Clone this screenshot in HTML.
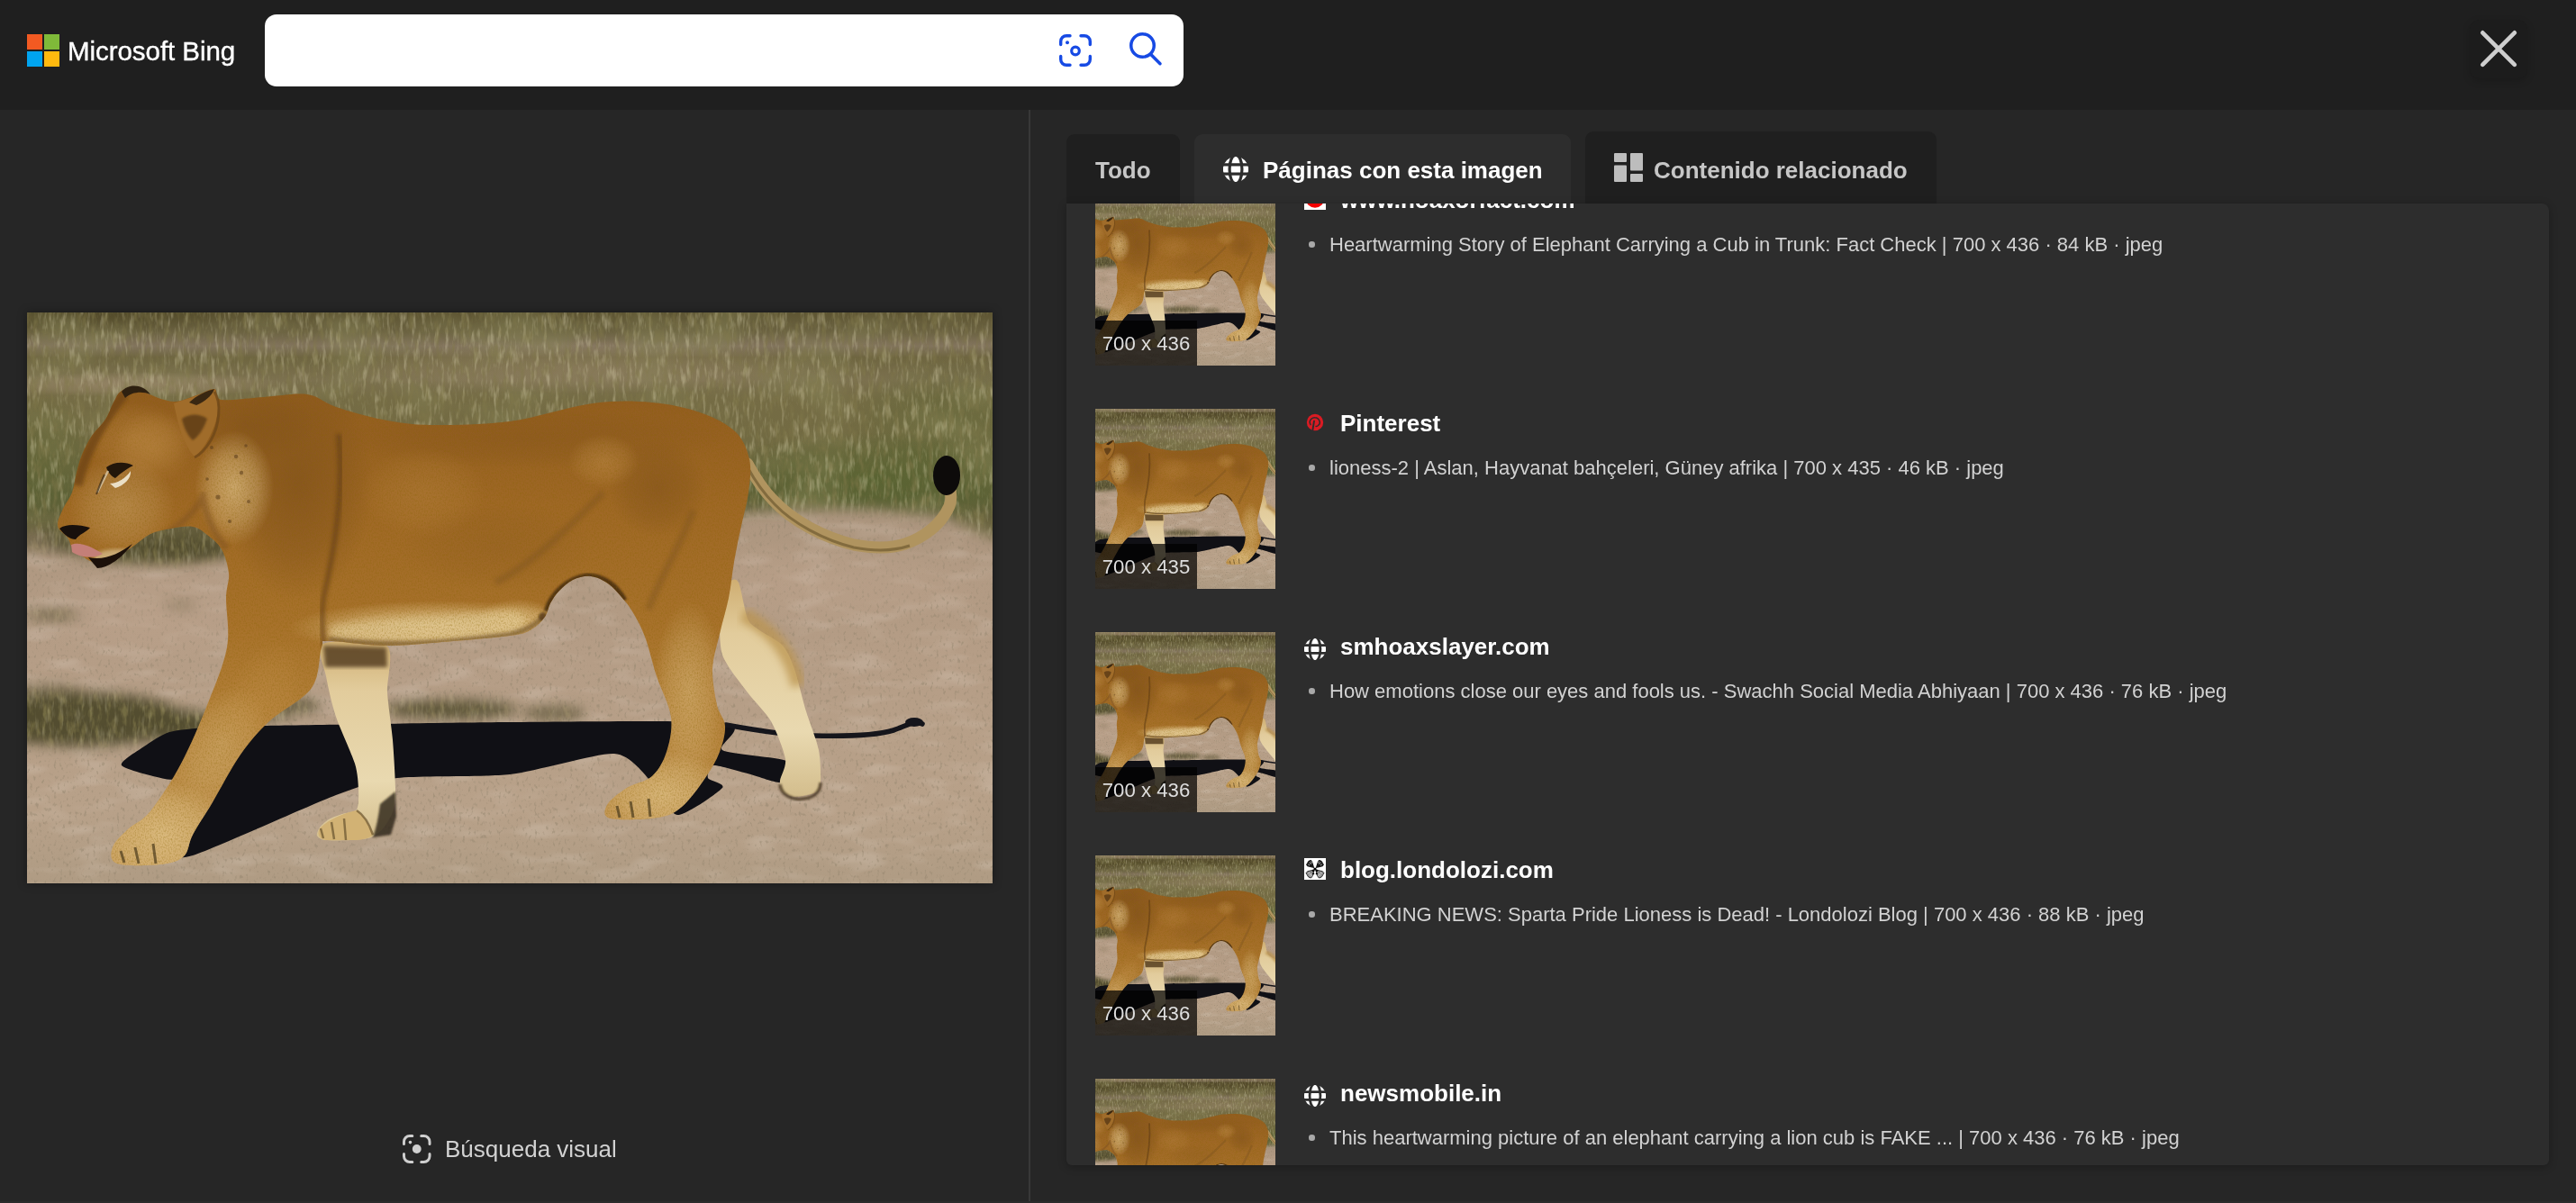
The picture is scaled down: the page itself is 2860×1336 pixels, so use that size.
<!DOCTYPE html>
<html lang="es">
<head>
<meta charset="utf-8">
<title>Bing - Búsqueda visual</title>
<style>
*{box-sizing:border-box;margin:0;padding:0}
html,body{width:2860px;height:1336px;overflow:hidden;background:#262626;font-family:"Liberation Sans",Arial,sans-serif;color:#fff}
body{position:relative}
@media (max-width:1600px){html{zoom:.5}}
.abs{position:absolute}
#wordmark,.tab span,.ttl,.dsc,.badge,#vsbtn span{will-change:transform}
/* header */
#hdr{position:absolute;left:0;top:0;width:2860px;height:122px;background:#1f1f1f}
#logo{position:absolute;left:30px;top:38px;width:36px;height:36px}
#logo i{position:absolute;width:17px;height:17px;display:block}
#wordmark{position:absolute;left:75px;top:34.800px;font-size:29.500px;line-height:44px;color:#fff;letter-spacing:-0.05px;white-space:nowrap;-webkit-text-stroke:.35px #fff}
#sbox{position:absolute;left:294px;top:16px;width:1020px;height:80px;background:#fff;border-radius:13px}
#closebg{position:absolute;left:2742px;top:22px;width:64px;height:65px;border-radius:10px;background:#1c1c1c;box-shadow:0 3px 8px rgba(0,0,0,.18)}
#close{position:absolute;left:2744px;top:24px;width:60px;height:60px}
/* left */
#divider{position:absolute;left:1142px;top:122px;width:2px;height:1214px;background:#383838}
#mainimg{position:absolute;left:30px;top:347px;width:1072px;height:634px;box-shadow:0 0 10px rgba(0,0,0,.35)}
#vsbtn{position:absolute;left:447px;top:1260px;height:32px;white-space:nowrap}
#vsbtn span{position:absolute;left:47.300px;top:0;font-size:26px;line-height:32px;color:#d2d2d2}
/* tabs */
.tab{position:absolute;border-radius:9px 9px 0 0;background:#1f1f1f;font-weight:bold;font-size:26px;color:#c6c6c6;white-space:nowrap}
.tab span{position:absolute;top:0;line-height:30px}
#panel{position:absolute;left:1184px;top:226px;width:1646px;height:1068px;background:#2d2d2d;border-radius:0 8px 6px 6px;overflow:hidden;box-shadow:0 2px 10px rgba(0,0,0,.28)}
.row{position:absolute;left:32px;width:1600px;height:200px}
.thumb{position:absolute;left:0;top:0;width:200px;height:200px;overflow:hidden;background:#a98a5a}
.badge{position:absolute;left:0;bottom:0;width:113px;height:50px;background:rgba(0,0,0,.72);color:#dedede;font-size:22.200px;line-height:52px;text-align:center;white-space:nowrap}
.fav{position:absolute;left:232px;top:3px;width:24px;height:24px}
.fav.g{top:7px}
.ttl{position:absolute;left:272px;top:1px;font-weight:bold;font-size:26px;line-height:30px;color:#fff;white-space:nowrap}
.dot{position:absolute;left:237.200px;top:62.300px;width:6.600px;height:6.600px;border-radius:50%;background:#a9a9a9}
.dsc{position:absolute;left:260px;top:53px;font-size:22px;line-height:26px;color:#d2d2d2;white-space:nowrap}
</style>
</head>
<body>
<svg width="0" height="0" style="position:absolute;left:-10px;top:-10px">
<!--LION_START-->
<symbol id="lion" viewBox="0 -36 1072 692" preserveAspectRatio="none">
<defs>
<linearGradient id="gGrass" x1="0" y1="0" x2="0" y2="1"><stop offset="0.0" stop-color="#9c876c"/><stop offset="0.026" stop-color="#94806a"/><stop offset="0.044" stop-color="#5a5030"/><stop offset="0.091" stop-color="#5a522f"/><stop offset="0.171" stop-color="#6c6342"/><stop offset="0.215" stop-color="#82745d"/><stop offset="0.253" stop-color="#6e6540"/><stop offset="0.326" stop-color="#7c714f"/><stop offset="0.385" stop-color="#756c45"/><stop offset="0.488" stop-color="#736b43"/><stop offset="0.606" stop-color="#6d6840"/><stop offset="0.709" stop-color="#5f6139"/><stop offset="0.797" stop-color="#665f3d"/><stop offset="0.9" stop-color="#615a3a"/><stop offset="1" stop-color="#736949"/></linearGradient>
<linearGradient id="gSand" x1="0" y1="0" x2="0" y2="1"><stop offset="0" stop-color="#a8927a"/><stop offset="0.42" stop-color="#ae9780"/><stop offset="0.6" stop-color="#b59d86"/><stop offset="0.85" stop-color="#b8a189"/><stop offset="1" stop-color="#ad9a82"/></linearGradient>
<linearGradient id="gBody" x1="0" y1="0" x2="0" y2="1"><stop offset="0" stop-color="#915c1f"/><stop offset="0.25" stop-color="#9f6825"/><stop offset="0.5" stop-color="#a8722b"/><stop offset="0.7" stop-color="#b4813a"/><stop offset="1" stop-color="#c79d5c"/></linearGradient>
<linearGradient id="gCream" x1="0" y1="0" x2="0" y2="1"><stop offset="0" stop-color="#cfae72"/><stop offset="0.25" stop-color="#e2cc9c"/><stop offset="0.7" stop-color="#e9d9b0"/><stop offset="1" stop-color="#d3bd8c"/></linearGradient>
<radialGradient id="gShoulder" cx=".5" cy=".5" r=".5"><stop offset="0" stop-color="#83531c" stop-opacity="0.8"/><stop offset=".6" stop-color="#83531c" stop-opacity="0.44"/><stop offset="1" stop-color="#83531c" stop-opacity="0"/></radialGradient>
<radialGradient id="gLight" cx=".5" cy=".5" r=".5"><stop offset="0" stop-color="#e2c58b" stop-opacity="0.85"/><stop offset=".6" stop-color="#e2c58b" stop-opacity="0.47"/><stop offset="1" stop-color="#e2c58b" stop-opacity="0"/></radialGradient>
<radialGradient id="gHi" cx=".5" cy=".5" r=".5"><stop offset="0" stop-color="#c89650" stop-opacity="0.7"/><stop offset=".6" stop-color="#c89650" stop-opacity="0.39"/><stop offset="1" stop-color="#c89650" stop-opacity="0"/></radialGradient>
<radialGradient id="gGreen" cx=".5" cy=".5" r=".5"><stop offset="0" stop-color="#56632f" stop-opacity="0.75"/><stop offset=".6" stop-color="#56632f" stop-opacity="0.41"/><stop offset="1" stop-color="#56632f" stop-opacity="0"/></radialGradient>
<radialGradient id="gDarkG" cx=".5" cy=".5" r=".5"><stop offset="0" stop-color="#4a4224" stop-opacity="0.8"/><stop offset=".6" stop-color="#4a4224" stop-opacity="0.44"/><stop offset="1" stop-color="#4a4224" stop-opacity="0"/></radialGradient>
<radialGradient id="gTuft" cx=".5" cy=".5" r=".5"><stop offset="0" stop-color="#4d4828" stop-opacity="0.95"/><stop offset=".6" stop-color="#4d4828" stop-opacity="0.52"/><stop offset="1" stop-color="#4d4828" stop-opacity="0"/></radialGradient>
<radialGradient id="gPink" cx=".5" cy=".5" r=".5"><stop offset="0" stop-color="#c4a892" stop-opacity="0.7"/><stop offset=".6" stop-color="#c4a892" stop-opacity="0.39"/><stop offset="1" stop-color="#c4a892" stop-opacity="0"/></radialGradient>
<filter id="fGrain" x="0" y="0" width="100%" height="100%"><feTurbulence type="fractalNoise" baseFrequency=".7 .45" numOctaves="2" seed="3"/><feColorMatrix type="matrix" values="0 0 0 0 .25  0 0 0 0 .13  0 0 0 0 0  0 0 0 -2.2 1.25"/></filter>
<filter id="fGrass" x="0" y="0" width="100%" height="100%"><feTurbulence type="fractalNoise" baseFrequency=".22 .05" numOctaves="3" seed="8"/><feColorMatrix type="matrix" values="0 0 0 0 .74  0 0 0 0 .69  0 0 0 0 .46  0 0 0 -3.2 1.6"/></filter>
<filter id="fGrassD" x="0" y="0" width="100%" height="100%"><feTurbulence type="fractalNoise" baseFrequency=".17 .055" numOctaves="3" seed="21"/><feColorMatrix type="matrix" values="0 0 0 0 .22  0 0 0 0 .19  0 0 0 0 .07  0 0 0 -3.2 1.7"/></filter>
<filter id="fBlotch" x="0" y="0" width="100%" height="100%"><feTurbulence type="fractalNoise" baseFrequency=".012 .02" numOctaves="2" seed="4"/><feColorMatrix type="matrix" values="0 0 0 0 .25  0 0 0 0 .24  0 0 0 0 .1  0 0 0 -3 1.6"/></filter>
<filter id="fSpeck" x="0" y="0" width="100%" height="100%"><feTurbulence type="fractalNoise" baseFrequency=".3 .2" numOctaves="2" seed="5"/><feColorMatrix type="matrix" values="0 0 0 0 .3  0 0 0 0 .24  0 0 0 0 .16  0 0 0 -5 2.1"/></filter>
<filter id="fSandL" x="0" y="0" width="100%" height="100%"><feTurbulence type="fractalNoise" baseFrequency=".02 .06" numOctaves="2" seed="11"/><feColorMatrix type="matrix" values="0 0 0 0 .82  0 0 0 0 .74  0 0 0 0 .66  0 0 0 -3 1.55"/></filter>
<filter id="b2"><feGaussianBlur stdDeviation="2"/></filter><filter id="b4"><feGaussianBlur stdDeviation="4"/></filter><filter id="b1"><feGaussianBlur stdDeviation="1"/></filter><filter id="b8" x="-10%" y="-10%" width="120%" height="120%"><feGaussianBlur stdDeviation="7"/></filter>
<clipPath id="cBody"><path d="M34 237 C33.2 231.7 37.3 224.2 40 218 C42.7 211.8 47.5 206.7 50 200 C52.5 193.3 53.2 185.0 55 178 C56.8 171.0 58.2 164.8 61 158 C63.8 151.2 67.7 143.5 72 137 C76.3 130.5 83.0 125.2 87 119 C91.0 112.8 93.0 105.3 96 100 C99.0 94.7 100.3 89.8 105 87 C109.7 84.2 118.8 82.3 124 83 C129.2 83.7 129.5 88.3 136 91 C142.5 93.7 154.3 98.8 163 99 C171.7 99.2 180.5 94.3 188 92 C195.5 89.7 203.3 84.2 208 85 C212.7 85.8 206.8 95.5 216 97 C225.2 98.5 247.2 95.0 263 94 C278.8 93.0 297.7 89.2 311 91 C324.3 92.8 329.0 100.3 343 105 C357.0 109.7 377.5 115.7 395 119 C412.5 122.3 424.5 124.7 448 125 C471.5 125.3 506.0 125.0 536 121 C566.0 117.0 601.7 104.5 628 101 C654.3 97.5 674.2 98.3 694 100 C713.8 101.7 731.7 105.7 747 111 C762.3 116.3 776.8 123.3 786 132 C795.2 140.7 799.5 151.7 802 163 C804.5 174.3 802.5 187.7 801 200 C799.5 212.3 795.7 224.2 793 237 C790.3 249.8 787.3 263.7 785 277 C782.7 290.3 781.7 303.7 779 317 C776.3 330.3 772.0 343.8 769 357 C766.0 370.2 761.5 382.8 761 396 C760.5 409.2 763.7 425.5 766 436 C768.3 446.5 774.5 450.3 775 459 C775.5 467.7 772.7 478.3 769 488 C765.3 497.7 760.0 506.8 753 517 C746.0 527.2 735.8 541.7 727 549 C718.2 556.3 713.2 558.8 700 561 C686.8 563.2 657.3 564.3 648 562 C638.7 559.7 641.0 552.7 644 547 C647.0 541.3 657.7 533.3 666 528 C674.3 522.7 686.7 521.7 694 515 C701.3 508.3 706.5 499.0 710 488 C713.5 477.0 716.8 463.0 715 449 C713.2 435.0 703.8 418.8 699 404 C694.2 389.2 690.5 372.0 686 360 C681.5 348.0 676.3 339.3 672 332 C667.7 324.7 664.5 321.2 660 316 C655.5 310.8 650.7 304.8 645 301 C639.3 297.2 632.5 293.7 626 293 C619.5 292.3 611.8 294.3 606 297 C600.2 299.7 595.2 304.7 591 309 C586.8 313.3 583.7 318.2 581 323 C578.3 327.8 578.5 333.2 575 338 C571.5 342.8 566.5 348.5 560 352 C553.5 355.5 554.3 356.5 536 359 C517.7 361.5 473.5 365.2 450 367 C426.5 368.8 414.2 370.3 395 370 C375.8 369.7 346.3 364.7 335 365 C323.7 365.3 330.2 363.3 327 372 C323.8 380.7 325.7 403.3 316 417 C306.3 430.7 282.2 441.7 269 454 C255.8 466.3 247.5 476.0 237 491 C226.5 506.0 214.8 529.2 206 544 C197.2 558.8 189.3 570.0 184 580 C178.7 590.0 180.0 598.5 174 604 C168.0 609.5 160.3 611.7 148 613 C135.7 614.3 108.8 615.2 100 612 C91.2 608.8 93.0 600.3 95 594 C97.0 587.7 105.0 580.7 112 574 C119.0 567.3 127.2 566.2 137 554 C146.8 541.8 160.5 520.7 171 501 C181.5 481.3 191.5 457.5 200 436 C208.5 414.5 218.5 391.8 222 372 C225.5 352.2 220.7 330.7 221 317 C221.3 303.3 224.8 299.0 224 290 C223.2 281.0 220.0 270.2 216 263 C212.0 255.8 205.3 251.2 200 247 C194.7 242.8 190.7 239.2 184 238 C177.3 236.8 167.8 238.7 160 240 C152.2 241.3 144.3 242.5 137 246 C129.7 249.5 122.8 256.7 116 261 C109.2 265.3 103.0 269.3 96 272 C89.0 274.7 80.3 277.7 74 277 C67.7 276.3 62.0 270.7 58 268 C54.0 265.3 52.2 264.0 50 261 C47.8 258.0 47.7 254.0 45 250 C42.3 246.0 34.8 242.3 34 237 Z"/></clipPath>
<mask id="mGrass" maskUnits="userSpaceOnUse" x="0" y="-36" width="1072" height="692"><path d="M-40 -60 C151.7 -109.7 918.3 -108.7 1110 -60 C1301.7 -11.3 1126.7 184.3 1110 232 C1093.3 279.7 1040.0 228.2 1010 226 C980.0 223.8 960.0 219.8 930 219 C900.0 218.2 868.3 219.2 830 221 C791.7 222.8 755.0 227.5 700 230 C645.0 232.5 566.7 232.7 500 236 C433.3 239.3 345.0 244.7 300 250 C255.0 255.3 251.7 263.3 230 268 C208.3 272.7 193.3 276.7 170 278 C146.7 279.3 111.7 278.7 90 276 C68.3 273.3 53.3 267.0 40 262 C26.7 257.0 23.3 250.0 10 246 C-3.3 242.0 -31.7 289.0 -40 238 C-48.3 187.0 -231.7 -10.3 -40 -60 Z" fill="#fff" filter="url(#b8)"/></mask>
<mask id="mTuft" maskUnits="userSpaceOnUse" x="0" y="200" width="1072" height="320"><g filter="url(#b8)" fill="#fff"><ellipse cx="60" cy="452" rx="118" ry="30"/><ellipse cx="150" cy="458" rx="70" ry="18"/><ellipse cx="255" cy="446" rx="40" ry="9" opacity=".7"/><ellipse cx="300" cy="437" rx="26" ry="8" opacity=".8"/><ellipse cx="470" cy="441" rx="75" ry="11" opacity=".9"/><ellipse cx="585" cy="445" rx="36" ry="8" opacity=".7"/><ellipse cx="28" cy="336" rx="30" ry="5" opacity=".8"/><ellipse cx="170" cy="325" rx="18" ry="3" opacity=".6"/><ellipse cx="150" cy="262" rx="80" ry="12" opacity=".8"/><ellipse cx="30" cy="256" rx="50" ry="10" opacity=".6"/><ellipse cx="20" cy="420" rx="40" ry="8" opacity=".5"/></g></mask>
</defs>
<rect x="0" y="-36" width="1072" height="692" fill="url(#gSand)"/>
<rect x="0" y="215" width="1072" height="441" filter="url(#fSandL)" opacity=".2"/>
<rect x="0" y="215" width="1072" height="441" filter="url(#fSpeck)" opacity=".5"/>
<ellipse cx="880" cy="300" rx="220" ry="50" fill="url(#gPink)" opacity=".5"/>
<ellipse cx="150" cy="330" rx="160" ry="60" fill="url(#gPink)" opacity=".5"/>
<g mask="url(#mGrass)">
<rect x="0" y="-36" width="1072" height="340" fill="url(#gGrass)"/>
<ellipse cx="950" cy="185" rx="200" ry="52" fill="url(#gGreen)"/>
<ellipse cx="1030" cy="120" rx="120" ry="70" fill="url(#gGreen)" opacity=".5"/>
<ellipse cx="40" cy="-10" rx="230" ry="36" fill="url(#gDarkG)"/>
<ellipse cx="640" cy="-24" rx="520" ry="26" fill="url(#gDarkG)" opacity=".6"/>
<ellipse cx="15" cy="170" rx="70" ry="80" fill="url(#gGreen)" opacity=".55"/>
<ellipse cx="620" cy="60" rx="300" ry="30" fill="url(#gPink)" opacity=".35"/>
<ellipse cx="120" cy="80" rx="170" ry="14" fill="url(#gPink)" opacity=".5"/>
<rect x="0" y="-36" width="1072" height="340" filter="url(#fBlotch)" opacity=".45"/>
<rect x="0" y="-36" width="1072" height="340" filter="url(#fGrass)" opacity=".36"/>
<rect x="0" y="-36" width="1072" height="340" filter="url(#fGrassD)" opacity=".5"/>
</g>
<g mask="url(#mTuft)">
<rect x="0" y="225" width="1072" height="280" fill="#4e492b" opacity=".95"/>
<rect x="0" y="225" width="1072" height="280" filter="url(#fGrassD)" opacity=".7"/>
<rect x="0" y="225" width="1072" height="280" filter="url(#fGrass)" opacity=".2"/>
</g>
<path d="M105 503 C102.3 498.8 123.8 486.3 130 482 C136.2 477.7 149.8 468.4 158 466 C166.2 463.6 187.8 461.8 200 461 C212.2 460.2 223.8 459.7 263 459 C302.2 458.3 476.1 455.4 536 455 C595.9 454.6 748.5 452.4 776 456 C803.5 459.6 764.2 481.1 772 486 C779.8 490.9 835.3 493.8 843 498 C850.7 502.2 843.0 520.4 838 522 C833.0 523.6 808.9 514.2 800 512 C791.1 509.8 767.1 502.4 762 503 C756.9 503.6 754.8 514.1 756 517 C757.2 519.9 776.0 523.2 772 528 C768.0 532.8 731.1 558.7 722 558 C712.9 557.3 702.2 529.9 694 522 C685.8 514.1 670.4 491.1 652 490 C633.6 488.9 564.1 509.9 536 513 C507.9 516.1 433.5 514.3 411 517 C388.5 519.7 369.5 526.0 343 536 C316.5 546.0 205.3 596.5 184 603 C162.7 609.5 157.6 601.2 160 592 C162.4 582.8 205.8 532.6 205 524 C204.2 515.4 164.7 520.5 153 518 C141.3 515.5 107.7 507.2 105 503 Z" fill="#101015"/>
<path d="M776 458 C820 466 850 470 873 470 C910 471 945 469 962 464 C975 460 985 452 994 457" fill="none" stroke="#15151b" stroke-width="5.5" stroke-linecap="round"/>
<ellipse cx="985" cy="455" rx="10" ry="5" fill="#15151b"/>
<path d="M800 168 C812 190 820 200 828 208 C850 232 885 250 918 258 C940 262 960 262 975 257 C995 250 1015 236 1024 215 C1027 208 1026 200 1024 192" fill="none" stroke="#b0945f" stroke-width="13" stroke-linecap="round"/>
<path d="M800 172 C812 194 822 205 830 213 C850 234 885 253 918 261 C945 266 965 264 980 259" fill="none" stroke="#6f5a30" stroke-width="3" opacity=".7"/>
<ellipse cx="1021" cy="181" rx="15" ry="22" fill="#0d0b0a"/>
<path d="M770 330 C768.9 340.7 768.0 367.7 772 380 C776.0 392.3 792.8 412.1 800 422 C807.2 431.9 820.4 444.1 826 454 C831.6 463.9 840.7 487.2 842 496 C843.3 504.8 836.5 515.2 836 520 C835.5 524.8 835.9 529.6 838 532 C840.1 534.4 846.9 537.9 852 538 C857.1 538.1 872.1 535.1 876 533 C879.9 530.9 880.6 528.3 881 522 C881.4 515.7 881.1 496.5 879 486 C876.9 475.5 868.6 455.0 865 443 C861.4 431.0 855.5 405.7 852 396 C848.5 386.3 844.3 375.9 839 370 C833.7 364.1 817.2 356.0 812 352 C806.8 348.0 802.9 346.9 800 340 C797.1 333.1 792.7 305.3 790 300 C787.3 294.7 782.7 296.0 780 300 C777.3 304.0 771.1 319.3 770 330 Z" fill="url(#gCream)"/>
<path d="M795 335 C825 352 848 375 856 415" stroke="#bb9450" stroke-width="16" fill="none" opacity=".75" filter="url(#b4)"/>
<path d="M836 524 C837 536 850 542 862 540 C873 539 881 533 881 522" stroke="#3a2c18" stroke-width="3.500" fill="none" opacity=".75" filter="url(#b1)"/>
<path d="M329 368 C320.1 372.5 330.1 393.2 332 404 C333.9 414.8 338.7 436.1 343 449 C347.3 461.9 360.7 490.2 364 501 C367.3 511.8 367.7 523.2 368 530 C368.3 536.8 368.4 548.4 366 552 C363.6 555.6 354.1 555.5 350 557 C345.9 558.5 338.3 561.0 335 563 C331.7 565.0 326.7 569.6 325 572 C323.3 574.4 321.2 579.1 322 581 C322.8 582.9 325.9 585.3 331 586 C336.1 586.7 353.2 586.4 360 586 C366.8 585.6 377.2 584.9 382 583 C386.8 581.1 392.7 576.1 396 572 C399.3 567.9 405.3 557.9 407 552 C408.7 546.1 409.1 538.3 409 528 C408.9 517.7 407.2 489.1 406 475 C404.8 460.9 400.9 436.0 400 422 C399.1 408.0 408.5 377.2 399 370 C389.5 362.8 337.9 363.5 329 368 Z" fill="url(#gCream)"/>
<path d="M329 370 L399 372 L400 394 L331 394 Z" fill="#4f391a" opacity=".8" filter="url(#b2)"/>
<path d="M366 553 C352 556 336 562 326 572 C321 578 324 585 332 586 L362 586 C372 586 380 584 384 580 C380 568 374 558 366 553 Z" fill="#d2b274"/>
<path d="M392 546 L409 532 L410 560 L404 580 L384 583 C388 572 390 560 392 546 Z" fill="#2c2214" opacity=".8" filter="url(#b1)"/>
<path d="M326 573 L329 584 M338 566 L341 585 M352 562 L354 586" stroke="#4a3a1c" stroke-width="2.500" opacity=".55"/>
<path d="M366 553 C374 558 380 568 384 580" stroke="#5a4522" stroke-width="2.500" fill="none" opacity=".6"/>
<path d="M34 237 C33.2 231.7 37.3 224.2 40 218 C42.7 211.8 47.5 206.7 50 200 C52.5 193.3 53.2 185.0 55 178 C56.8 171.0 58.2 164.8 61 158 C63.8 151.2 67.7 143.5 72 137 C76.3 130.5 83.0 125.2 87 119 C91.0 112.8 93.0 105.3 96 100 C99.0 94.7 100.3 89.8 105 87 C109.7 84.2 118.8 82.3 124 83 C129.2 83.7 129.5 88.3 136 91 C142.5 93.7 154.3 98.8 163 99 C171.7 99.2 180.5 94.3 188 92 C195.5 89.7 203.3 84.2 208 85 C212.7 85.8 206.8 95.5 216 97 C225.2 98.5 247.2 95.0 263 94 C278.8 93.0 297.7 89.2 311 91 C324.3 92.8 329.0 100.3 343 105 C357.0 109.7 377.5 115.7 395 119 C412.5 122.3 424.5 124.7 448 125 C471.5 125.3 506.0 125.0 536 121 C566.0 117.0 601.7 104.5 628 101 C654.3 97.5 674.2 98.3 694 100 C713.8 101.7 731.7 105.7 747 111 C762.3 116.3 776.8 123.3 786 132 C795.2 140.7 799.5 151.7 802 163 C804.5 174.3 802.5 187.7 801 200 C799.5 212.3 795.7 224.2 793 237 C790.3 249.8 787.3 263.7 785 277 C782.7 290.3 781.7 303.7 779 317 C776.3 330.3 772.0 343.8 769 357 C766.0 370.2 761.5 382.8 761 396 C760.5 409.2 763.7 425.5 766 436 C768.3 446.5 774.5 450.3 775 459 C775.5 467.7 772.7 478.3 769 488 C765.3 497.7 760.0 506.8 753 517 C746.0 527.2 735.8 541.7 727 549 C718.2 556.3 713.2 558.8 700 561 C686.8 563.2 657.3 564.3 648 562 C638.7 559.7 641.0 552.7 644 547 C647.0 541.3 657.7 533.3 666 528 C674.3 522.7 686.7 521.7 694 515 C701.3 508.3 706.5 499.0 710 488 C713.5 477.0 716.8 463.0 715 449 C713.2 435.0 703.8 418.8 699 404 C694.2 389.2 690.5 372.0 686 360 C681.5 348.0 676.3 339.3 672 332 C667.7 324.7 664.5 321.2 660 316 C655.5 310.8 650.7 304.8 645 301 C639.3 297.2 632.5 293.7 626 293 C619.5 292.3 611.8 294.3 606 297 C600.2 299.7 595.2 304.7 591 309 C586.8 313.3 583.7 318.2 581 323 C578.3 327.8 578.5 333.2 575 338 C571.5 342.8 566.5 348.5 560 352 C553.5 355.5 554.3 356.5 536 359 C517.7 361.5 473.5 365.2 450 367 C426.5 368.8 414.2 370.3 395 370 C375.8 369.7 346.3 364.7 335 365 C323.7 365.3 330.2 363.3 327 372 C323.8 380.7 325.7 403.3 316 417 C306.3 430.7 282.2 441.7 269 454 C255.8 466.3 247.5 476.0 237 491 C226.5 506.0 214.8 529.2 206 544 C197.2 558.8 189.3 570.0 184 580 C178.7 590.0 180.0 598.5 174 604 C168.0 609.5 160.3 611.7 148 613 C135.7 614.3 108.8 615.2 100 612 C91.2 608.8 93.0 600.3 95 594 C97.0 587.7 105.0 580.7 112 574 C119.0 567.3 127.2 566.2 137 554 C146.8 541.8 160.5 520.7 171 501 C181.5 481.3 191.5 457.5 200 436 C208.5 414.5 218.5 391.8 222 372 C225.5 352.2 220.7 330.7 221 317 C221.3 303.3 224.8 299.0 224 290 C223.2 281.0 220.0 270.2 216 263 C212.0 255.8 205.3 251.2 200 247 C194.7 242.8 190.7 239.2 184 238 C177.3 236.8 167.8 238.7 160 240 C152.2 241.3 144.3 242.5 137 246 C129.7 249.5 122.8 256.7 116 261 C109.2 265.3 103.0 269.3 96 272 C89.0 274.7 80.3 277.7 74 277 C67.7 276.3 62.0 270.7 58 268 C54.0 265.3 52.2 264.0 50 261 C47.8 258.0 47.7 254.0 45 250 C42.3 246.0 34.8 242.3 34 237 Z" fill="url(#gBody)"/>
<g clip-path="url(#cBody)">
<ellipse cx="460" cy="350" rx="170" ry="30" fill="url(#gLight)"/>
<path d="M336 348 C380 340 450 338 540 332 C560 340 556 352 536 359 C470 369 395 371 335 365 Z" fill="#e0c792" opacity=".75" filter="url(#b4)"/>
<ellipse cx="545" cy="340" rx="45" ry="22" fill="url(#gLight)" opacity=".7"/>
<ellipse cx="300" cy="190" rx="85" ry="130" fill="url(#gShoulder)"/>
<ellipse cx="245" cy="125" rx="75" ry="42" fill="url(#gShoulder)" opacity=".85"/>
<ellipse cx="700" cy="195" rx="55" ry="55" fill="url(#gShoulder)" opacity=".75"/>
<ellipse cx="560" cy="140" rx="220" ry="34" fill="url(#gShoulder)" opacity=".5"/>
<ellipse cx="520" cy="260" rx="110" ry="50" fill="url(#gShoulder)" opacity=".3"/>
<ellipse cx="640" cy="165" rx="40" ry="30" fill="url(#gHi)" opacity=".6"/>
<ellipse cx="440" cy="200" rx="70" ry="50" fill="url(#gHi)" opacity=".35"/>
<ellipse cx="230" cy="195" rx="44" ry="64" fill="url(#gLight)" opacity=".8"/>
<ellipse cx="105" cy="215" rx="60" ry="55" fill="url(#gLight)" opacity=".4"/>
<ellipse cx="120" cy="140" rx="60" ry="40" fill="url(#gHi)" opacity=".5"/>
<path d="M346 135 C352 200 342 260 329 318 C326 340 328 358 330 372" stroke="#5a3814" stroke-width="6" fill="none" opacity=".55" filter="url(#b2)"/>
<path d="M577 332 C583 312 600 296 622 293 C640 293 654 304 663 320" stroke="#3d260c" stroke-width="7" fill="none" opacity=".8" filter="url(#b1)"/>
<circle cx="573" cy="338" r="5" fill="#4a2f12" opacity=".7" filter="url(#b1)"/>
<path d="M335 363 C395 371 450 369 536 358 C552 354 566 346 574 338" stroke="#4e3312" stroke-width="5" fill="none" opacity=".6" filter="url(#b2)"/>
<path d="M640 200 C600 240 560 280 520 300 M740 220 C720 270 700 300 690 330" stroke="#7c5220" stroke-width="8" fill="none" opacity=".4" filter="url(#b2)"/>
<ellipse cx="150" cy="580" rx="80" ry="60" fill="url(#gLight)" opacity=".85"/>
<ellipse cx="215" cy="480" rx="45" ry="70" fill="url(#gLight)" opacity=".4" transform="rotate(28 215 480)"/>
<ellipse cx="705" cy="535" rx="75" ry="48" fill="url(#gLight)" opacity=".8"/>
<ellipse cx="735" cy="420" rx="40" ry="100" fill="url(#gLight)" opacity=".55"/>
<ellipse cx="260" cy="430" rx="40" ry="70" fill="url(#gHi)" opacity=".4" transform="rotate(25 260 430)"/>
<rect x="0" y="60" width="1072" height="570" filter="url(#fGrain)" opacity=".35"/>
</g>
<path d="M104 598 L108 611 M120 594 L124 612 M140 590 L143 612" stroke="#4a3a1c" stroke-width="3" opacity=".7"/>
<path d="M655 548 L658 561 M670 543 L673 561 M690 540 L692 560" stroke="#4a3a1c" stroke-width="3" opacity=".7"/>
<g clip-path="url(#cBody)">
<path d="M108 90 C92 110 76 135 66 160 C62 170 58 182 56 192" stroke="#6e4516" stroke-width="11" fill="none" opacity=".8" filter="url(#b2)"/>
<ellipse cx="140" cy="150" rx="45" ry="40" fill="url(#gHi)" opacity=".45"/>
<path d="M140 255 C165 240 185 225 195 205 C200 230 210 250 222 262" stroke="#7a5020" stroke-width="7" fill="none" opacity=".45" filter="url(#b2)"/>
<ellipse cx="100" cy="272" rx="26" ry="9" fill="#dcc596" opacity=".7" filter="url(#b2)"/>
<g fill="#5a3c1a" opacity=".55"><circle cx="205" cy="150" r="2"/><circle cx="232" cy="160" r="2.200"/><circle cx="243" cy="148" r="1.800"/><circle cx="238" cy="178" r="2.200"/><circle cx="212" cy="205" r="2.600"/><circle cx="246" cy="210" r="2"/><circle cx="225" cy="232" r="2"/><circle cx="200" cy="185" r="1.800"/></g>
</g>
<path d="M105 88 C112 79 128 79 137 91 C128 87 116 88 109 95 Z" fill="#2e2010"/>
<path d="M163 101 C178 96 196 90 208 85 C214 96 213 112 208 126 C202 142 194 154 186 160 C176 150 168 128 163 101 Z" fill="#a06c2a"/>
<path d="M172 118 C180 112 192 112 200 118 C196 130 190 138 184 142 C178 136 174 128 172 118 Z" fill="#5e3d18" opacity=".85" filter="url(#b1)"/>
<path d="M180 100 C188 92 200 87 208 85 C205 93 197 99 188 103 Z" fill="#2e2010" opacity=".9"/>
<path d="M208 88 C216 100 214 125 204 142 C198 152 192 158 186 161" stroke="#6a4418" stroke-width="3" fill="none" opacity=".7"/>
<path d="M88 172 C96 166 108 165 118 170 C112 173 104 178 98 184 C94 182 90 178 88 172 Z" fill="#22160a"/>
<path d="M92 190 C100 190 110 184 115 176 C116 184 108 192 98 195 Z" fill="#eadfc6"/>
<path d="M90 176 C86 184 82 192 78 200" stroke="#d8c8a8" stroke-width="2.500" fill="none" opacity=".8"/>
<path d="M86 180 C82 188 80 194 77 202" stroke="#3a2812" stroke-width="2" fill="none" opacity=".7"/>
<path d="M36 240 C44 234 58 236 70 239 C66 244 58 246 54 252 C48 252 42 248 36 240 Z" fill="#18100c"/>
<path d="M49 258 C58 254 72 260 84 268 C74 274 58 272 50 266 Z" fill="#c47f78"/>
<path d="M68 272 C86 276 102 268 117 257 C106 272 90 284 78 284 Z" fill="#1c1009"/>
</symbol>
<!--LION_END-->
</svg>
<div id="hdr">
  <div id="logo"><i style="left:0;top:0;background:#f25a22"></i><i style="left:19px;top:0;background:#7fba39"></i><i style="left:0;top:19px;background:#00a4ef"></i><i style="left:19px;top:19px;background:#ffb90f"></i></div>
  <div id="wordmark">Microsoft Bing</div>
  <div id="sbox">
    <svg class="abs" style="left:882px;top:22px" width="36" height="36" viewBox="0 0 36 36" fill="none" stroke="#174ae4" stroke-width="3.4" stroke-linecap="round">
      <path d="M1.7 11.5V8a6.3 6.3 0 0 1 6.3-6.3h4"/><path d="M24 1.7h4a6.3 6.3 0 0 1 6.3 6.3v3.500"/><path d="M34.300 24.500V28a6.3 6.300 0 0 1-6.300 6.300h-4"/><path d="M12 34.300H8A6.300 6.300 0 0 1 1.700 28v-3.500"/>
      <circle cx="18" cy="18.500" r="4.300" stroke-width="3.200"/><circle cx="9" cy="9.300" r="2" fill="#174ae4" stroke="none"/>
    </svg>
    <svg class="abs" style="left:956px;top:16px" width="44" height="44" viewBox="0 0 44 44" fill="none" stroke="#174ae4" stroke-width="3.500" stroke-linecap="round">
      <circle cx="18.500" cy="18.500" r="12.750"/><path d="M27.800 28.500L38 38.700"/>
    </svg>
  </div>
  <div id="closebg"></div><svg id="close" viewBox="0 0 60 60" fill="none" stroke="#cecece" stroke-width="4.700" stroke-linecap="round"><path d="M12.300 12.300L47.800 47.800M47.800 12.300L12.300 47.800"/></svg>
</div>

<div id="divider"></div>
<div class="abs" style="left:0;top:1334px;width:2860px;height:2px;background:#2b2b2b"></div>
<div id="mainimg"><svg width="1072" height="634" viewBox="0 0 1072 634" style="display:block"><use href="#lion" x="0" y="-36" width="1072" height="692"/></svg></div>
<div id="vsbtn">
  <svg class="abs" style="left:0;top:0" width="31.500" height="32" viewBox="0 0 32 32" preserveAspectRatio="none" fill="none" stroke="#cfcfcf" stroke-width="3" stroke-linecap="round">
    <path d="M1.500 10.500V8A6.500 6.500 0 0 1 8 1.500h3"/><path d="M21 1.500h3A6.500 6.500 0 0 1 30.500 8v2.500"/><path d="M30.500 21.500V24a6.500 6.500 0 0 1-6.500 6.500h-3"/><path d="M11 30.500H8A6.500 6.500 0 0 1 1.500 24v-2.500"/>
    <circle cx="16" cy="16" r="5" fill="#cfcfcf" stroke="none"/><circle cx="8.600" cy="8.600" r="1.800" fill="#cfcfcf" stroke="none"/>
  </svg>
  <span>Búsqueda visual</span>
</div>

<div class="tab" style="left:1184px;top:149px;width:126px;height:77px"><span style="left:32px;top:25px">Todo</span></div>
<div class="tab" style="left:1326px;top:149px;width:418px;height:77px;background:#2d2d2d;color:#fff">
  <svg class="abs" style="left:32px;top:25px" width="28" height="28" viewBox="0 0 24 24"><circle cx="12" cy="12" r="12.100" fill="#fff"/><ellipse cx="12" cy="12" rx="7.300" ry="16.500" fill="#2d2d2d"/><ellipse cx="12" cy="12" rx="4.550" ry="12.100" fill="#fff"/><path d="M-1 7.600H25M-1 16.400H25" stroke="#2d2d2d" stroke-width="2.700" fill="none"/></svg>
  <span style="left:76px;top:25px">Páginas con esta imagen</span>
</div>
<div class="tab" style="left:1760px;top:146px;width:390px;height:80px">
  <svg class="abs" style="left:32px;top:24px" width="32" height="32" viewBox="0 0 32 32" fill="#bdbdbd"><rect x="0" y="0" width="14" height="10" rx="1"/><rect x="18" y="0" width="14" height="19.500" rx="1"/><rect x="0" y="13.500" width="14" height="18.500" rx="1"/><rect x="18" y="23" width="14" height="9" rx="1"/></svg>
  <span style="left:76px;top:28px">Contenido relacionado</span>
</div>

<div id="panel">
  <div class="row" style="top:-20px">
    <div class="thumb"><svg width="200" height="200" viewBox="0 0 200 200" style="display:block"><use href="#lion" x="-40" y="0" width="309.8" height="200"/></svg><div class="badge">700 x 436</div></div>
    <svg class="fav" viewBox="0 0 24 24"><rect width="24" height="24" fill="#fff"/><circle cx="12" cy="11.500" r="10.200" fill="#f40000"/></svg>
    <div class="ttl">www.hoaxorfact.com</div>
    <div class="dot"></div><div class="dsc">Heartwarming Story of Elephant Carrying a Cub in Trunk: Fact Check | 700 x 436 · 84 kB · jpeg</div>
  </div>
  <div class="row" style="top:228px">
    <div class="thumb"><svg width="200" height="200" viewBox="0 0 200 200" style="display:block"><use href="#lion" x="-40" y="0" width="309.8" height="200"/></svg><div class="badge">700 x 435</div></div>
    <svg class="fav" viewBox="0 0 24 24"><circle cx="12" cy="12" r="9.200" fill="#d91b23"/><g fill="none" stroke="#2d2d2d" stroke-linecap="round"><path d="M7.100 14.600C5.900 12.800 6.100 10.100 7.850 8.340C9.300 6.900 10.800 6.650 11.830 6.700C14.200 6.700 16.300 8.200 17.200 11.200C17.600 13.400 16.600 14.700 15.800 15.100C15 16.200 14 16.700 13.100 16.600" stroke-width="1.500"/><path d="M11 10.600L9.400 20.500" stroke-width="1.900"/></g></svg>
    <div class="ttl">Pinterest</div>
    <div class="dot"></div><div class="dsc">lioness-2 | Aslan, Hayvanat bahçeleri, Güney afrika | 700 x 435 · 46 kB · jpeg</div>
  </div>
  <div class="row" style="top:476px">
    <div class="thumb"><svg width="200" height="200" viewBox="0 0 200 200" style="display:block"><use href="#lion" x="-40" y="0" width="309.8" height="200"/></svg><div class="badge">700 x 436</div></div>
    <svg class="fav g" viewBox="0 0 24 24"><circle cx="12" cy="12" r="12.100" fill="#fff"/><ellipse cx="12" cy="12" rx="7.300" ry="16.500" fill="#2d2d2d"/><ellipse cx="12" cy="12" rx="4.550" ry="12.100" fill="#fff"/><path d="M-1 7.600H25M-1 16.400H25" stroke="#2d2d2d" stroke-width="2.700" fill="none"/></svg>
    <div class="ttl">smhoaxslayer.com</div>
    <div class="dot"></div><div class="dsc">How emotions close our eyes and fools us. - Swachh Social Media Abhiyaan | 700 x 436 · 76 kB · jpeg</div>
  </div>
  <div class="row" style="top:724px">
    <div class="thumb"><svg width="200" height="200" viewBox="0 0 200 200" style="display:block"><use href="#lion" x="-40" y="0" width="309.8" height="200"/></svg><div class="badge">700 x 436</div></div>
    <svg class="fav" viewBox="0 0 24 24"><rect width="24" height="24" fill="#fff"/><defs><g id="lz"><path d="M10.900 11L6.500 10L3.600 9.300L2 7.200L3.200 5.600L4.200 3.600L6 2.300L7.800 2.100L9.100 4L9.900 6.600L11.100 10.600Z"/><path d="M4.400 6.800L6 8M5.600 4.600L7.600 6.800M7.600 3.600L8.400 5.600" stroke="#fff" stroke-width=".75" fill="none"/></g></defs><use href="#lz" fill="#151515"/><use href="#lz" fill="#151515" transform="matrix(-1 0 0 1 24 0)"/><g stroke="#222" stroke-width=".9"><use href="#lz" fill="#8a8a8a" transform="matrix(1 0 0 -1 0 24)"/><use href="#lz" fill="#8a8a8a" transform="matrix(-1 0 0 -1 24 24)"/></g><circle cx="12" cy="12" r="1.600" fill="#000"/><circle cx="10.100" cy="13.900" r="1.200" fill="#000"/><circle cx="13.900" cy="13.900" r="1.200" fill="#000"/><circle cx="10.200" cy="17.300" r="1.100" fill="#000"/><circle cx="13.800" cy="17.300" r="1.100" fill="#000"/></svg>
    <div class="ttl">blog.londolozi.com</div>
    <div class="dot"></div><div class="dsc">BREAKING NEWS: Sparta Pride Lioness is Dead! - Londolozi Blog | 700 x 436 · 88 kB · jpeg</div>
  </div>
  <div class="row" style="top:972px">
    <div class="thumb"><svg width="200" height="200" viewBox="0 0 200 200" style="display:block"><use href="#lion" x="-40" y="0" width="309.8" height="200"/></svg><div class="badge">700 x 436</div></div>
    <svg class="fav g" viewBox="0 0 24 24"><circle cx="12" cy="12" r="12.100" fill="#fff"/><ellipse cx="12" cy="12" rx="7.300" ry="16.500" fill="#2d2d2d"/><ellipse cx="12" cy="12" rx="4.550" ry="12.100" fill="#fff"/><path d="M-1 7.600H25M-1 16.400H25" stroke="#2d2d2d" stroke-width="2.700" fill="none"/></svg>
    <div class="ttl">newsmobile.in</div>
    <div class="dot"></div><div class="dsc">This heartwarming picture of an elephant carrying a lion cub is FAKE ... | 700 x 436 · 76 kB · jpeg</div>
  </div>
</div>
</body>
</html>
